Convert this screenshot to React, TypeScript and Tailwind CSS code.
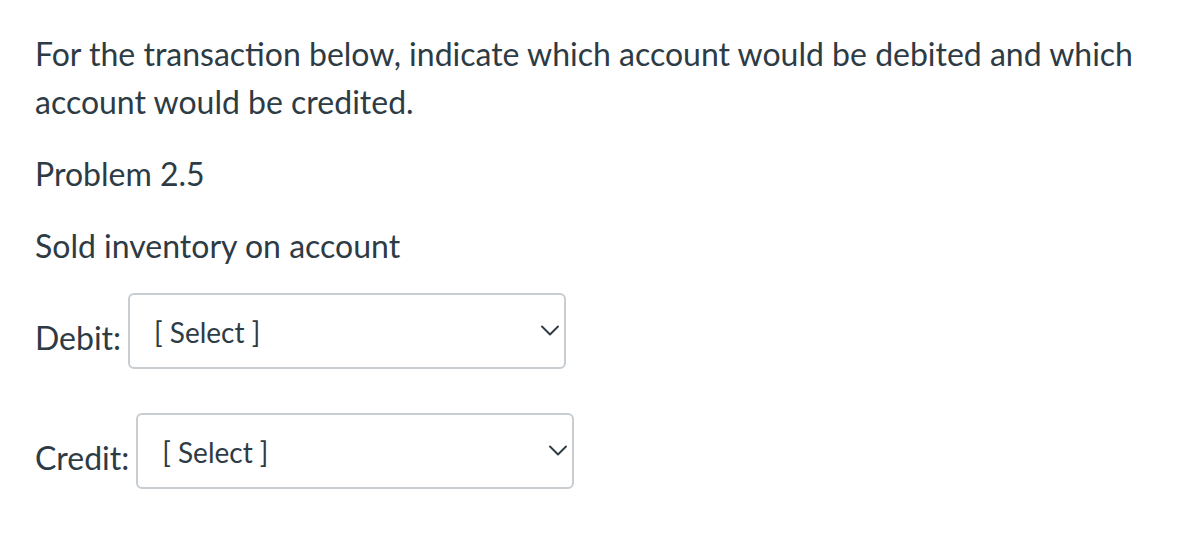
import React from "react";

function Chevron() {
  return (
    <svg width="20" height="12" viewBox="0 0 20 12" fill="none" className="shrink-0">
      <path d="M2 1.5 L10 9.5 L18 1.5" stroke="#2D3B45" strokeWidth="1.9" strokeLinecap="round" strokeLinejoin="round" />
    </svg>
  );
}

function SelectBox() {
  return (
    <div className="w-[438px] h-[76px] border-2 border-[#c7cdd1] rounded-[6px] bg-white flex items-center justify-between pl-[24px] pr-[4px]">
      <span className="text-[28px] leading-none text-[#2D3B45] mt-[1px]">[ Select ]</span>
      <Chevron />
    </div>
  );
}

export default function App() {
  return (
    <div
      className="min-h-[546px] bg-white text-[#2D3B45] pl-[35px] pt-[30px]"
      style={{ fontFamily: "Lato, 'Noto Sans', sans-serif" }}
    >
      <p className="text-[32px] leading-[48px] w-[1140px]">
        For the transaction below, indicate which account would be debited and which account would be credited.
      </p>
      <p className="text-[32px] leading-[48px] mt-[24px]">Problem 2.5</p>
      <p className="text-[32px] leading-[48px] mt-[24px]">Sold inventory on account</p>
      <div className="mt-[23px] flex items-center gap-[7px]">
        <span className="text-[32px] leading-[48px] mt-[14px]">Debit:</span>
        <SelectBox />
      </div>
      <div className="mt-[44px] flex items-center gap-[7px]">
        <span className="text-[32px] leading-[48px] mt-[14px]">Credit:</span>
        <SelectBox />
      </div>
    </div>
  );
}
